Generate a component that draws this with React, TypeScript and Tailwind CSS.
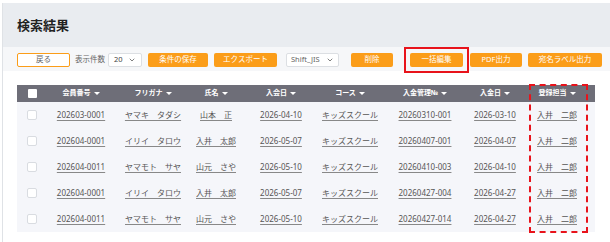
import { ChevronDown } from 'lucide-react';

const columns = [
  { label: '会員番号', w: 'w-[68px]' },
  { label: 'フリガナ', w: 'w-[76px]' },
  { label: '氏名', w: 'w-[50px]' },
  { label: '入会日', w: 'w-[80px]' },
  { label: 'コース', w: 'w-[58px]' },
  { label: '入金管理№', w: 'w-[92px]' },
  { label: '入金日', w: 'w-[48px]' },
  { label: '登録担当', w: 'w-[76px]' },
];

const rows = [
  ['202603-0001', 'ヤマキ　タダシ', '山本　正', '2026-04-10', 'キッズスクール', '20260310-001', '2026-03-10', '入井　二郎'],
  ['202604-0001', 'イリイ　タロウ', '入井　太郎', '2026-05-07', 'キッズスクール', '20260407-001', '2026-04-07', '入井　二郎'],
  ['202604-0011', 'ヤマモト　サヤ', '山元　さや', '2026-05-10', 'キッズスクール', '20260410-003', '2026-04-10', '入井　二郎'],
  ['202604-0001', 'イリイ　タロウ', '入井　太郎', '2026-05-07', 'キッズスクール', '20260427-004', '2026-04-27', '入井　二郎'],
  ['202604-0011', 'ヤマモト　サヤ', '山元　さや', '2026-05-10', 'キッズスクール', '20260427-014', '2026-04-27', '入井　二郎'],
];

function OrangeButton({ label, w }: { label: string; w: string }) {
  return (
    <button
      className={`${w} h-[14px] rounded-[2px] bg-[#fb9d19] text-white text-[7.5px] leading-none flex items-center justify-center`}
    >
      {label}
    </button>
  );
}

export default function App() {
  return (
    <div className="w-[610px] h-[242px] bg-white pt-[3px] pl-[2px] overflow-hidden font-['Noto_Sans','Noto_Sans_CJK_JP',sans-serif]">
      <div className="h-[239px] border-l border-[#dfe2e6]">
        {/* Title panel */}
        <div className="h-[44px] bg-[#e9ecf0] flex items-center pl-[14px]">
          <h1 className="text-[13px] font-bold text-[#222] leading-none">検索結果</h1>
        </div>

        {/* Toolbar */}
        <div className="h-[24px] bg-[#f6f7f9] flex items-center pl-[14px] pt-[1px]">
          <button className="w-[53px] h-[14px] bg-white border border-[#fb9d19] rounded-[2px] text-[7.5px] text-[#666] leading-none">
            戻る
          </button>
          <span className="ml-[5px] text-[7.5px] text-[#666]">表示件数</span>
          <div className="ml-[3px] w-[34px] h-[14px] bg-white border border-[#dcdfe3] rounded-[2px] flex items-center justify-between px-[5px] text-[7.5px] text-[#444]">
            <span>20</span>
            <ChevronDown size={8} strokeWidth={2.5} className="text-[#666]" />
          </div>
          <div className="ml-[6px]">
            <OrangeButton label="条件の保存" w="w-[60px]" />
          </div>
          <div className="ml-[6px]">
            <OrangeButton label="エクスポート" w="w-[63px]" />
          </div>
          <div className="ml-[9px] w-[53px] h-[14px] bg-white border border-[#dcdfe3] rounded-[2px] flex items-center justify-between px-[4px] text-[7.5px] text-[#666]">
            <span>Shift_JIS</span>
            <ChevronDown size={8} strokeWidth={2.5} className="text-[#666]" />
          </div>
          <div className="ml-[12px]">
            <OrangeButton label="削除" w="w-[42px]" />
          </div>
          <div className="ml-[11px] border-2 border-[#e8131b] px-[4px] py-[4px]">
            <OrangeButton label="一括編集" w="w-[53px]" />
          </div>
          <div className="ml-[1px]">
            <OrangeButton label="PDF出力" w="w-[52px]" />
          </div>
          <div className="ml-[6px]">
            <OrangeButton label="宛名ラベル出力" w="w-[74px]" />
          </div>
        </div>

        {/* Table */}
        <div className="relative ml-[14px] mt-[14px] w-[578px] bg-[#f5f6fa]">
          <div className="h-[17px] bg-[#6e6e78] flex items-center text-white text-[7px] font-bold">
            <div className="w-[30px] flex justify-center">
              <span className="w-[9px] h-[9px] bg-white rounded-[1px]" />
            </div>
            {columns.map((c) => (
              <div key={c.label} className={`${c.w} flex justify-center items-center gap-[3px] whitespace-nowrap`}>
                <span>{c.label}</span>
                <span className="w-0 h-0 border-l-[3px] border-r-[3px] border-t-[3.5px] border-l-transparent border-r-transparent border-t-white" />
              </div>
            ))}
          </div>
          {rows.map((r, i) => (
            <div key={i} className="h-[26px] flex items-center text-[8px] text-[#555]">
              <div className="w-[30px] flex justify-center">
                <span className="w-[10px] h-[10px] bg-white border border-[#d9dce1] rounded-[2px]" />
              </div>
              {r.map((v, j) => (
                <div key={j} className={`${columns[j].w} flex justify-center`}>
                  <span className="underline underline-offset-2 decoration-[#888] whitespace-nowrap">{v}</span>
                </div>
              ))}
            </div>
          ))}

          {/* highlight on 登録担当 column */}
          <div className="absolute left-[512px] top-[-1px] w-[59px] h-[149px] border-2 border-dashed border-[#e8131b]" />
        </div>
      </div>
    </div>
  );
}
